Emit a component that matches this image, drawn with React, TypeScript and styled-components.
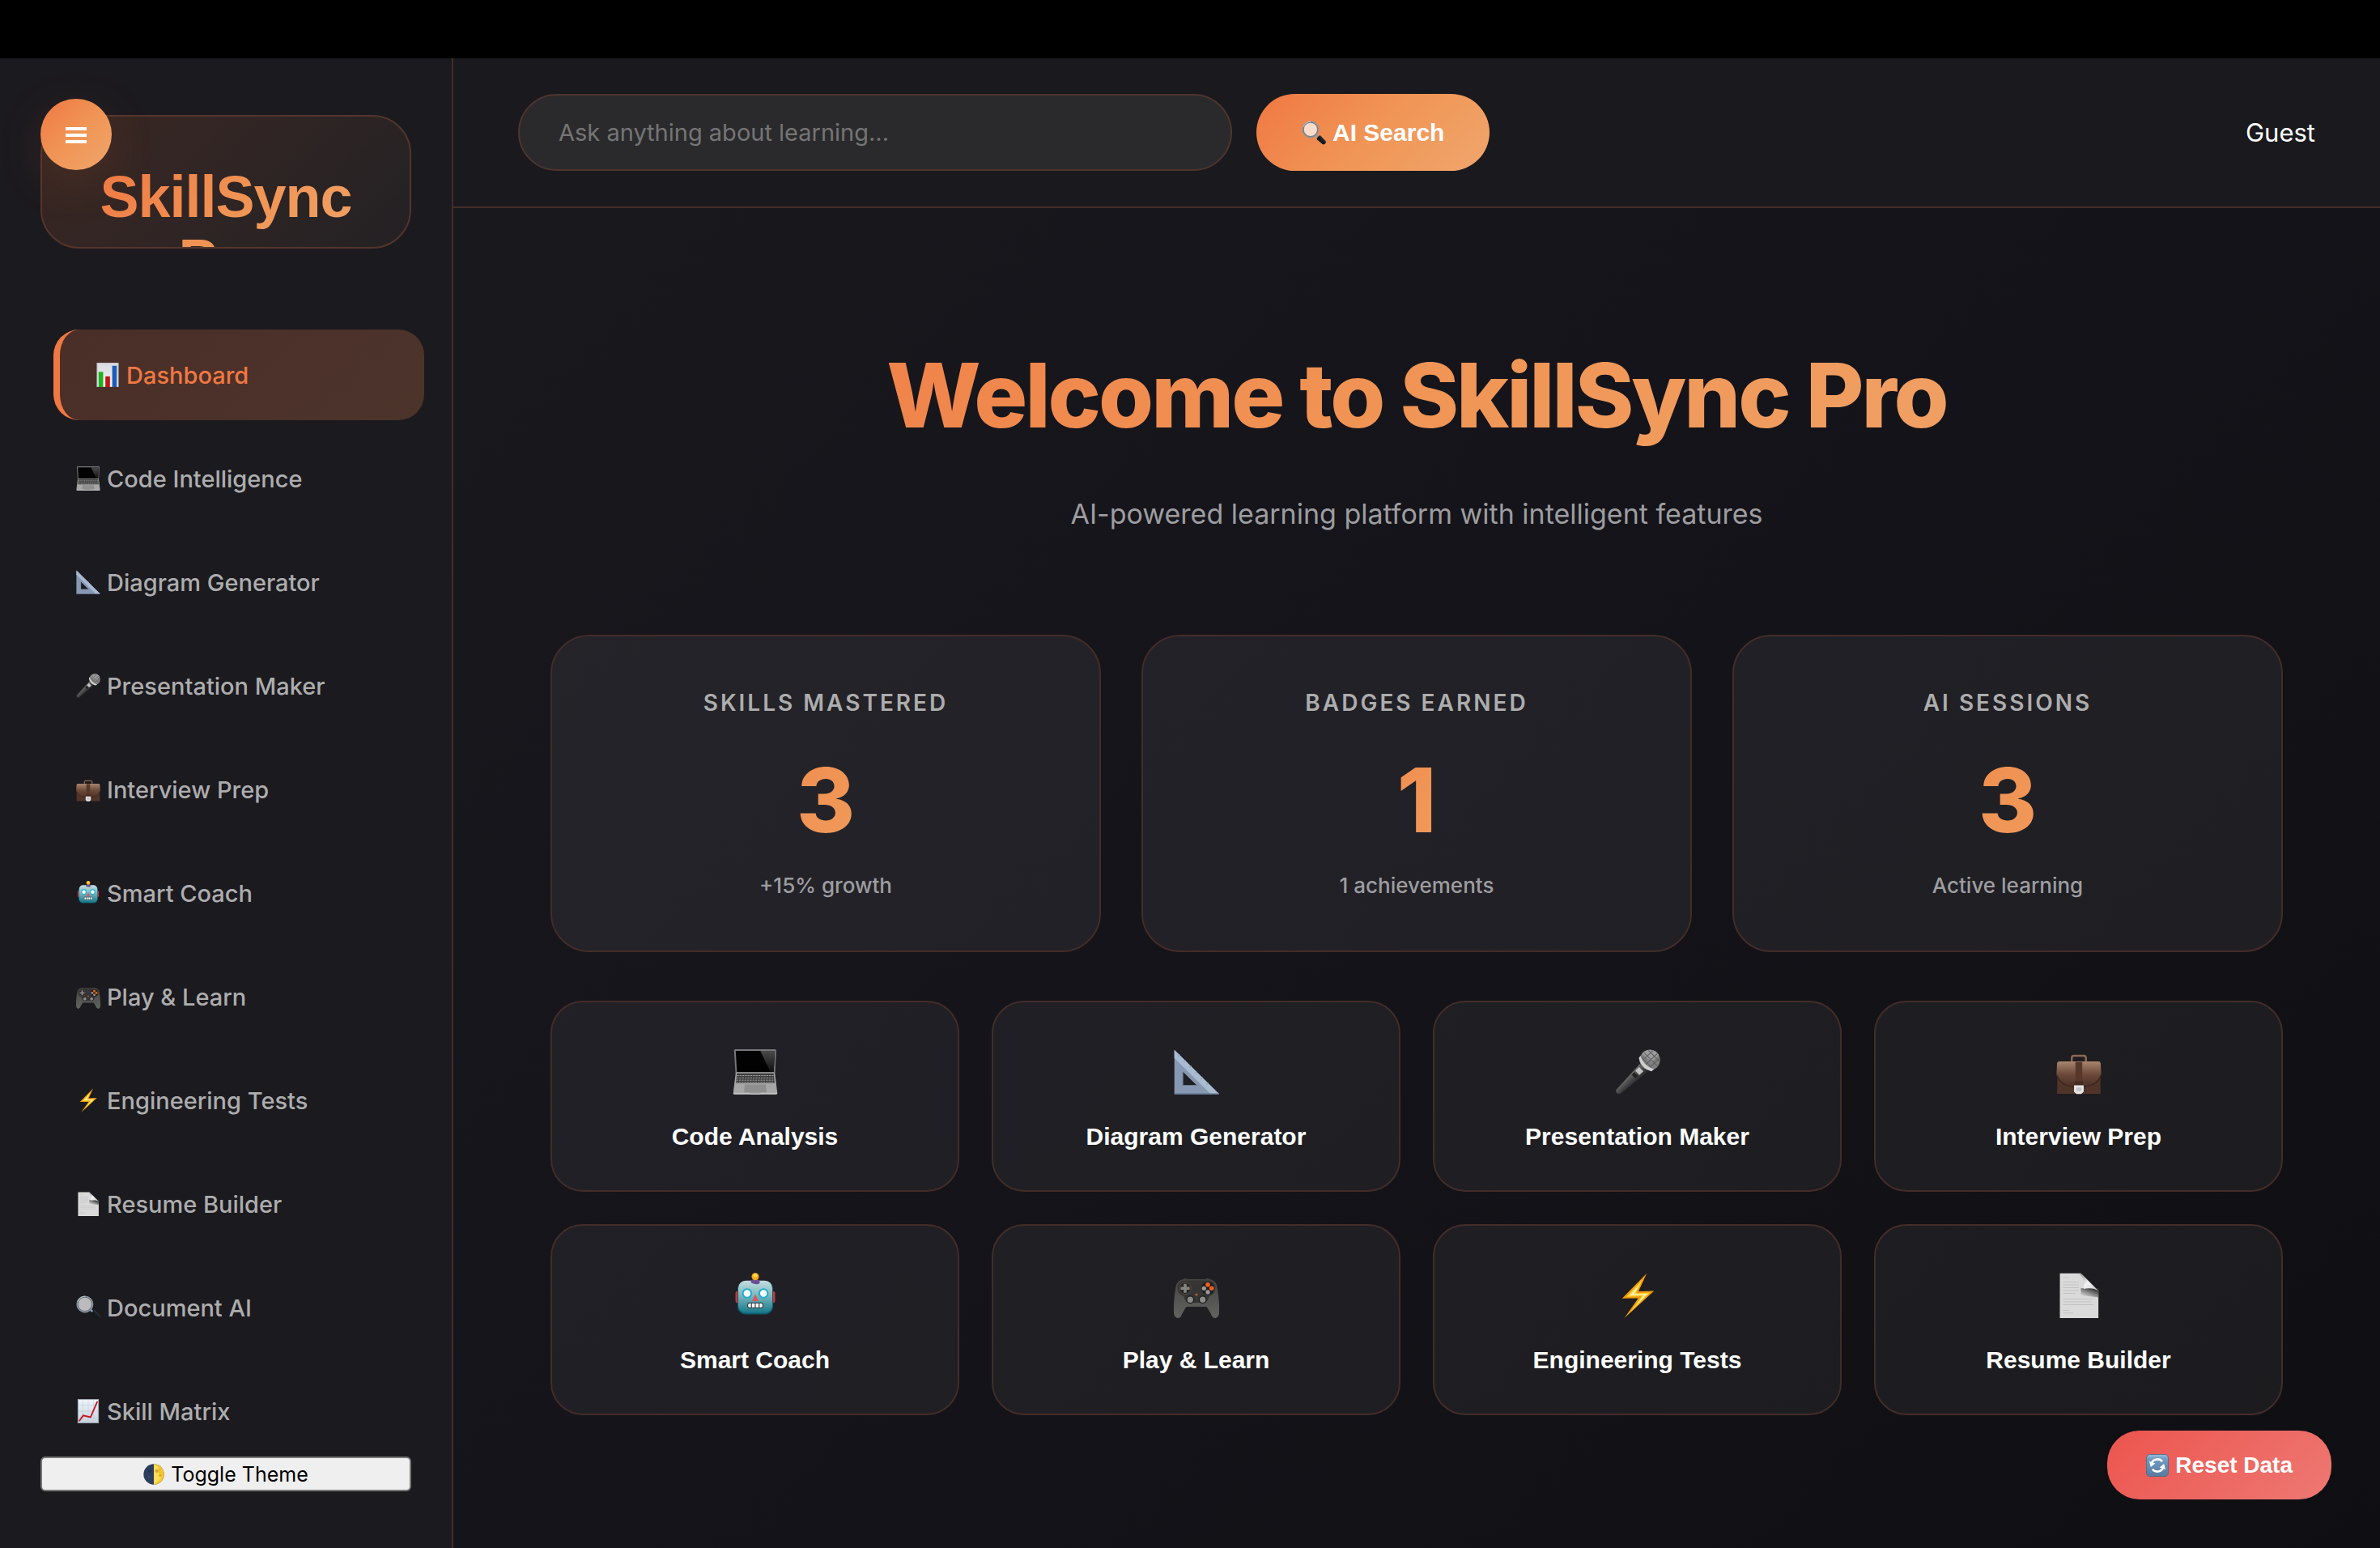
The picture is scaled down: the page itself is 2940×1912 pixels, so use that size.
import React from "react";
import styled, { createGlobalStyle, css } from "styled-components";

const ui = `Inter, "Liberation Sans", sans-serif`;
const arial = `"Liberation Sans", Arial, sans-serif`;
const accent = "linear-gradient(135deg, #f07843 0%, #f09555 50%, #f0a66d 100%)";
const line = "#432d28";

const GlobalStyle = createGlobalStyle`
  *, *::before, *::after { box-sizing: border-box; }
  body {
    margin: 0;
    background: #000;
    color: #fff;
    font-family: ${ui};
    font-size: 31px;
  }
  button, input { font: inherit; }
  h1, h2, h3, p, ul { margin: 0; padding: 0; }
`;

/* ---------- icons ---------- */

const Glyph = styled.svg<{ $size: number }>`
  display: block;
  flex: none;
  width: ${(p) => p.$size}px;
  height: ${(p) => p.$size}px;
`;

type IconName =
  | "bars" | "laptop" | "ruler" | "mic" | "case" | "robot" | "game"
  | "bolt" | "page" | "lens" | "trend" | "moon" | "sync";

const art: Record<IconName, (id: string) => React.ReactNode> = {
  bars: (id) => (
    <>
      <defs>
        <linearGradient id={id} x1="0" y1="0" x2="0" y2="1">
          <stop offset="0" stopColor="#d9dade" />
          <stop offset="1" stopColor="#f4f4f6" />
        </linearGradient>
      </defs>
      <rect x="2" y="0" width="28" height="32" fill={`url(#${id})`} stroke="#a9abb2" />
      <rect x="4" y="12" width="6" height="20" fill="#1fb41f" />
      <rect x="13" y="18" width="6" height="14" fill="#c01414" />
      <rect x="22" y="4" width="6" height="28" fill="#1c5cb8" />
    </>
  ),
  laptop: (id) => (
    <>
      <defs>
        <linearGradient id={id} x1="0" y1="0" x2="0" y2="1">
          <stop offset="0" stopColor="#4a4a4a" />
          <stop offset="1" stopColor="#101010" />
        </linearGradient>
      </defs>
      <path d="M1.6 0h28.6l.6.8-.8 16H2L1 .8z" fill="#77787a" />
      <path d="M2.2 1.2h27.6l-.8 14.8H3z" fill="#020202" />
      <path d="M19.6 1.2h10.2L29 16h-2.4z" fill={`url(#${id})`} />
      <path d="M2.2 16.4h27.6l1.8 14.6-.6 1H.9l-.5-1z" fill="#a6a6a6" />
      <path d="M3 17h26l.7 6.8H2.3z" fill="#3a3a3a" />
      <path d="M3 18.6h26M2.8 20.2h26.4M2.6 21.8h26.8M2.5 23.3h27" stroke="#b5b5b5" strokeWidth=".5" strokeDasharray="1.4 .5" />
      <path d="M8.6 24.8h14.8l.6 5.8H8z" fill="#8f8f8f" />
      <path d="M1 31h11l.7.6h6.6L20 31h11.4" stroke="#d0d0d0" strokeWidth=".5" fill="none" />
    </>
  ),
  ruler: () => (
    <>
      <path fillRule="evenodd" d="M.4.4 32 31.6H.4zM6.4 15.8v9.6h9.8z" fill="#8798b2" />
      <path d="M.4.4 32 31.6h-6L.4 6.2z" fill="#a9bbd1" />
      <path d="m3 5 1.4-1.2M7 9l1.4-1.2M11 13l1.4-1.2M15 17l1.4-1.2M19 21l1.4-1.2M23 25l1.4-1.2" stroke="#8fa2bd" strokeWidth=".6" />
      <path d="M.4 31.6H32" stroke="#5f6f89" strokeWidth=".8" />
      <path d="M6.4 15.8v9.6h9.8" stroke="#64748d" strokeWidth=".6" fill="none" />
    </>
  ),
  mic: (id) => (
    <>
      <defs>
        <linearGradient id={id} x1=".3" y1=".3" x2=".7" y2=".7">
          <stop offset="0" stopColor="#8a8a8a" />
          <stop offset=".5" stopColor="#4a4a4a" />
          <stop offset="1" stopColor="#161616" />
        </linearGradient>
      </defs>
      <path d="M17.4 10.4 1 28.4c-1.2 1.6 1 4 2.8 3L22.8 16z" fill={`url(#${id})`} />
      <path d="m14.4 15.2 2.6-2.6 3 3-2.8 2.6z" fill="#c4c4c4" />
      <path d="m11.8 18 1.8-1.8 2.6 2.6-1.8 1.8z" fill="#222" />
      <circle cx="24.6" cy="7.6" r="7.2" fill="#7f7f7f" />
      <path d="M19 3.2a7.2 7.2 0 0 1 12 .8l-5.2 5z" fill="#9c9c9c" />
      <path d="M20.4 2.4 30 11.8M23.6.8l8 8M18.2 5l8.6 9M30 3 19.6 12.6M27 .9 17.6 9.4M31.6 6.2l-8.4 8" stroke="#606060" strokeWidth=".6" />
      <path d="M18 4.6c1.2 4.4 4.6 8 9.6 9.4l-1.8 1.6c-5-1.4-8-4.8-9-9.4z" fill="#d0d0d0" />
    </>
  ),
  case: (id) => (
    <>
      <defs>
        <linearGradient id={id} x1="0" y1="0" x2="0" y2="1">
          <stop offset="0" stopColor="#a8856e" />
          <stop offset=".5" stopColor="#6d4a3a" />
          <stop offset="1" stopColor="#4a3026" />
        </linearGradient>
      </defs>
      <path d="M11 9V6.2Q11 4.6 12.6 4.6h6.8Q21 4.6 21 6.2V9" fill="none" stroke="#8a6850" strokeWidth="1.4" />
      <path d="M1 10q0-1.4 1.4-1.4h27.2Q31 8.6 31 10l.4 21.4H.6z" fill="#503428" />
      <path d="M.6 10q.2-1.4 1.8-1.4h27.2q1.6 0 1.8 1.4l.4 8c-3 7.4-9 8.4-15.8 8.4S3.2 25.4.2 18z" fill={`url(#${id})`} />
      <path d="M.3 18.2c3 7.4 8.9 8.4 15.7 8.4s12.7-1 15.7-8.4" fill="none" stroke="#3b241b" strokeWidth=".7" />
      <rect x="13.6" y="9" width="4.8" height="13.6" fill="#563729" />
      <path d="M13.4 22.6h5.2l1 4h-7.2z" fill="#452a20" />
      <path d="M12.6 25.4h6.8v4.6l-1.8 1.6h-3.200l-1.8-1.6z" fill="#e6e6e8" />
      <rect x="14.2" y="27" width="3.6" height="2.6" fill="#c2c4c8" />
    </>
  ),
  robot: (id) => (
    <>
      <defs>
        <linearGradient id={id} x1="0" y1="0" x2="0" y2="1">
          <stop offset="0" stopColor="#c4dedf" />
          <stop offset=".45" stopColor="#7db8bf" />
          <stop offset="1" stopColor="#17788a" />
        </linearGradient>
      </defs>
      <rect x="2" y="13" width="3" height="8.4" rx="1.4" fill="#d0353c" />
      <rect x="27" y="13" width="3" height="8.4" rx="1.4" fill="#d0353c" />
      <rect x="3.4" y="5.8" width="25.2" height="23.6" rx="5.6" fill="#0f5c6e" />
      <rect x="4" y="5.6" width="24" height="22.8" rx="5.2" fill={`url(#${id})`} />
      <path d="M12.8 6.6q0-2 3.2-2t3.2 2-3.2 1.4-3.2-1.4z" fill="#6a4f96" />
      <circle cx="16" cy="2.700" r="2.6" fill="#f5a81c" />
      <circle cx="16" cy="2" r="1.4" fill="#ffd84a" />
      <circle cx="10.2" cy="14.6" r="3" fill="#fff" stroke="#1fb0cf" strokeWidth="1.2" />
      <circle cx="21.8" cy="14.6" r="3" fill="#fff" stroke="#1fb0cf" strokeWidth="1.2" />
      <path d="m16 15.2 2.2 4.8h-4.4z" fill="#e0525a" />
      <rect x="10.6" y="21.4" width="10.8" height="3.4" rx="1.4" fill="#fff" stroke="#334a52" strokeWidth=".7" />
      <path d="M13.3 21.4v3.4M16 21.4v3.4M18.7 21.4v3.4" stroke="#334a52" strokeWidth=".7" />
    </>
  ),
  game: (id) => (
    <>
      <defs>
        <linearGradient id={id} x1="0" y1="0" x2="0" y2="1">
          <stop offset="0" stopColor="#444543" />
          <stop offset="1" stopColor="#62625e" />
        </linearGradient>
      </defs>
      <path d="M7 4.4Q8.2 3.4 9.4 4.6h13.2q1.2-1.2 2.4-.2 4.8.8 5.6 5.6Q32.400 20 32 28.600q-.4 3-2.600 3.400-2.400 0-3.200-3l-3-5H8.8l-3 5q-.8 3-3.200 3Q.4 31.6 0 28.6-.4 20 1.4 10 2.2 5.2 7 4.4z" fill={`url(#${id})`} />
      <path d="M2.6 9.6Q4 5.4 8.4 5.4h15.200q4.400 0 5.800 4.200.4 5.400-4.400 7-1 4.600-4.800 4.600h-8.400q-3.800 0-4.800-4.600-4.800-1.600-4.400-7z" fill="#343534" />
      <circle cx="8" cy="11" r="4.2" fill="#262626" stroke="#6b4a3a" strokeWidth=".5" />
      <path d="M7 7.8h2V10h2.2v2H9v2.2H7V12H4.8v-2H7z" fill="#858582" />
      <circle cx="24" cy="11" r="4.6" fill="#1e1e1e" />
      <circle cx="24" cy="8.4" r="1.6" fill="#f0601c" />
      <circle cx="26.7" cy="11" r="1.6" fill="#f0601c" />
      <circle cx="21.3" cy="11" r="1.5" fill="#9a9a98" />
      <circle cx="24" cy="13.7" r="1.5" fill="#9a9a98" />
      <circle cx="11.6" cy="19" r="2.5" fill="#8b8b88" stroke="#1c1c1c" strokeWidth=".8" />
      <circle cx="20.4" cy="19" r="2.5" fill="#8b8b88" stroke="#1c1c1c" strokeWidth=".8" />
      <circle cx="16" cy="15.4" r=".9" fill="#b85a2c" />
    </>
  ),
  bolt: () => (
    <>
      <path d="M22.4.4 5 18.2l11.4-.2L6.6 32l21-19.200-11 .4z" fill="#f09a0c" />
      <path d="M19.6 4.6 8 17l10.8-.4-8 11.2L24.800 14l-10 .4z" fill="#ffd033" />
      <path d="M17.4 8.4 10.4 16l10-.4-5 7 7.400-7.800-9.400.4z" fill="#fff3bd" />
    </>
  ),
  page: (id) => (
    <>
      <defs>
        <linearGradient id={id} x1="0" y1="0" x2="1" y2="1">
          <stop offset="0" stopColor="#8a8a8a" />
          <stop offset=".5" stopColor="#f4f4f4" />
          <stop offset="1" stopColor="#c4c4c4" />
        </linearGradient>
        <linearGradient id={`${id}s`} x1="0.6" y1="0" x2="0" y2=".8">
          <stop offset="0" stopColor="#3c3c3c" />
          <stop offset="1" stopColor="#dadada" />
        </linearGradient>
      </defs>
      <path d="M2.6.4h14.8L29.8 12.800V32H2.600z" fill="#dadada" />
      <path d="M17.400 11h12.400v6.400l-12.400-1.400z" fill={`url(#${id}s)`} />
      <path d="M16 .4h1.400L29.800 12.800c-3-2-6.800-2.400-10.400-1.400C20 7 19.600 3.400 16 .4z" fill={`url(#${id})`} />
      <path d="M5 3.4h4M5 6.6h11M5 8.6h11M5 10.6h11M5 12.6h11M5 14.6h9M5 18.6h21M5 20.600h20M5 22.600h21M5 26.600h4M5 28.400h7" stroke="#c2c2c2" strokeWidth=".6" />
    </>
  ),
  lens: (id) => (
    <>
      <defs>
        <linearGradient id={id} x1="0" y1="1" x2="1" y2="0">
          <stop offset="0" stopColor="#050607" />
          <stop offset=".6" stopColor="#1c2226" />
          <stop offset="1" stopColor="#8b99a2" />
        </linearGradient>
      </defs>
      <path d="m18.4 20 1.800-1.800 3 2.600-2 2z" fill="#8fa0aa" />
      <path d="m20 23 3-3.200q1.400-.6 2.400.4l6 6.400q1.200 1.800-.4 3.800-2 1.800-3.800.6L20.400 25q-1-1-.4-2z" fill={`url(#${id})`} />
      <circle cx="11.600" cy="11.600" r="9.600" fill="#fff" fillOpacity=".7" />
      <circle cx="11.600" cy="11.600" r="10.200" fill="none" stroke="#8796a0" strokeWidth="2" />
      <circle cx="11.600" cy="11.600" r="9.200" fill="none" stroke="#59636b" strokeWidth=".8" />
      <path d="M2 8Q5 1.400 12 1.200" fill="none" stroke="#c9d2d8" strokeWidth="1" />
    </>
  ),
  trend: (id) => (
    <>
      <defs>
        <linearGradient id={id} x1="0" y1="0" x2="0" y2="1">
          <stop offset="0" stopColor="#eef3f8" />
          <stop offset="1" stopColor="#c6d2de" />
        </linearGradient>
      </defs>
      <rect x="2.4" y=".4" width="27.2" height="31.2" fill={`url(#${id})`} stroke="#9aa6b2" strokeWidth=".8" />
      <path d="M9 1v30M16 1v30M23 1v30M3 8h26M3 16h26M3 24h26" stroke="#b9c8d6" strokeWidth=".5" />
      <path d="M4 29 9.4 21.6 19 24 28 3.2" fill="none" stroke="#c8141e" strokeWidth="2" />
    </>
  ),
  moon: () => (
    <>
      <circle cx="16" cy="16" r="15.6" fill="#2c3d5e" />
      <path d="M16 .4a15.6 15.6 0 0 1 0 31.200z" fill="#f5c62e" />
      <path d="M16 .4Q24 3 23 9t3 9-10 13.600z" fill="#ffdc55" />
      <circle cx="20.6" cy="11" r="2.6" fill="#d9a13a" />
      <circle cx="25.6" cy="17.6" r="2" fill="#dca53a" />
      <circle cx="25" cy="9" r="1.600" fill="#e3b040" />
      <circle cx="10" cy="11" r="2.6" fill="#23314e" />
      <circle cx="8.6" cy="20" r="2" fill="#384a6e" />
    </>
  ),
  sync: (id) => (
    <>
      <defs>
        <linearGradient id={id} x1="0" y1="0" x2="0" y2="1">
          <stop offset="0" stopColor="#9cc0dc" />
          <stop offset=".2" stopColor="#6f9cc4" />
          <stop offset="1" stopColor="#587a9e" />
        </linearGradient>
      </defs>
      <rect x=".5" y=".5" width="31" height="31" rx="5" fill={`url(#${id})`} stroke="#4a6a8a" />
      <path d="M8 12.4A9 9 0 0 1 23 10.6M24 19.6A9 9 0 0 1 9 21.4" fill="none" stroke="#fff" strokeWidth="3" />
      <path d="m4.6 10.2 2 8 6.400-5zM27.400 21.800l-2-8-6.400 5z" fill="#fff" />
    </>
  ),
};

function Icon({ name, size }: { name: IconName; size: number }) {
  const id = React.useId();
  return (
    <Glyph $size={size} viewBox="0 0 32 32" aria-hidden="true">
      {art[name](id)}
    </Glyph>
  );
}

/* ---------- frame ---------- */

const Page = styled.div`
  display: grid;
  grid-template-rows: 72px 1fr;
  min-height: 100vh;
`;

const TopStrip = styled.div`
  background: #000;
`;

const Shell = styled.div`
  display: grid;
  grid-template-columns: 560px minmax(0, 1fr);
  background: linear-gradient(135deg, #1b1a1e 0%, #15141a 50%, #0f0f13 100%);
`;

/* ---------- sidebar ---------- */

const Sidebar = styled.aside`
  position: relative;
  display: flex;
  flex-direction: column;
  padding: 70px 50px;
  border-right: 2px solid ${line};
  background: #1b1a1f;
`;

const MenuButton = styled.button`
  position: absolute;
  top: 50px;
  left: 50px;
  display: grid;
  place-items: center;
  width: 88px;
  height: 88px;
  padding: 0;
  border: 0;
  border-radius: 50%;
  background: ${accent};
  box-shadow: 0 16px 64px rgba(240, 120, 67, 0.12);
`;

const Brand = styled.div`
  height: 165px;
  padding: 60px 62px;
  border: 2px solid #55352b;
  border-radius: 48px;
  overflow: hidden;
  background: linear-gradient(135deg, #38251f 0%, #332624 35%, #232124 100%);
  text-align: center;
`;

const BrandName = styled.h2`
  font: 700 72px/78px ${arial};
  letter-spacing: -1px;
  color: transparent;
  background: ${accent};
  background-clip: text;
`;

const NavList = styled.ul`
  display: grid;
  gap: 16px;
  margin-top: 100px;
  list-style: none;
`;

const NavLink = styled.a<{ $active?: boolean }>`
  display: flex;
  align-items: center;
  gap: 8px;
  height: 112px;
  padding: 0 44px;
  border-radius: 32px;
  color: #adadae;
  font-weight: 500;
  font-size: 29px;
  text-decoration: none;
  white-space: nowrap;
  ${(p) =>
    p.$active &&
    css`
      margin: 0 -16px 0 16px;
      border-left: 8px solid #f07843;
      background: linear-gradient(135deg, #4a2e28, #4c342b);
      color: #f07843;
    `}
`;

const ThemeButton = styled.button`
  display: flex;
  align-items: center;
  justify-content: center;
  gap: 8px;
  height: 43px;
  padding: 0;
  border: 2px solid #767676;
  border-radius: 6px;
  background: #efefef;
  color: #000;
  font-size: 25px;
`;

/* ---------- main column ---------- */

const Main = styled.div`
  display: flex;
  flex-direction: column;
`;

const Header = styled.header`
  display: flex;
  align-items: center;
  justify-content: space-between;
  padding: 44px 80px;
  border-bottom: 2px solid ${line};
  background: #1a191d;
`;

const SearchForm = styled.form`
  display: flex;
  gap: 30px;
`;

const SearchInput = styled.input`
  width: 882px;
  height: 95px;
  padding: 0 48px;
  border: 2px solid #4e352d;
  border-radius: 48px;
  outline: 0;
  background: #2a2a2c;
  color: #fff;
  font-size: 29px;
  &::placeholder { color: #757575; opacity: 1; }
`;

const PillButton = styled.button<{ $tone: "accent" | "danger" }>`
  display: flex;
  align-items: center;
  gap: 8px;
  border: 0;
  color: #fff;
  font-family: ${arial};
  font-weight: 700;
  white-space: nowrap;
  ${(p) =>
    p.$tone === "accent"
      ? css`
          padding: 0 56px;
          border-radius: 48px;
          background: ${accent};
          font-size: 30px;
        `
      : css`
          position: fixed;
          right: 60px;
          bottom: 60px;
          height: 85px;
          padding: 0 48px;
          border-radius: 40px;
          background: linear-gradient(135deg, #ec554e, #ee7873);
          font-size: 28px;
        `}
`;

const Content = styled.main`
  padding: 158px 120px 120px;
`;

const Hero = styled.section`
  text-align: center;
`;

const HeroTitle = styled.h1`
  font-weight: 800;
  font-size: 110px;
  line-height: 146px;
  letter-spacing: -3px;
  color: transparent;
  background: ${accent};
  background-clip: text;
`;

const HeroText = styled.p`
  margin-top: 44px;
  color: #9d9da0;
  font-size: 34px;
  line-height: 60px;
`;

const Stats = styled.section`
  display: grid;
  grid-template-columns: repeat(3, 1fr);
  gap: 50px;
  margin-top: 119px;
`;

const StatCard = styled.article`
  display: flex;
  flex-direction: column;
  align-items: center;
  height: 392px;
  padding: 58px 48px;
  border: 2px solid ${line};
  border-radius: 48px;
  background: rgba(255, 255, 255, 0.06);
`;

const StatLabel = styled.h3`
  color: #adadae;
  font-weight: 600;
  font-size: 28px;
  line-height: 48px;
  letter-spacing: 3px;
  text-transform: uppercase;
`;

const StatValue = styled.p`
  align-self: stretch;
  margin-top: 40px;
  font-weight: 800;
  font-size: 110px;
  line-height: 112px;
  text-align: center;
  color: transparent;
  background: ${accent};
  background-clip: text;
`;

const StatNote = styled.p`
  margin-top: 28px;
  color: #9d9da0;
  font-weight: 500;
  font-size: 26px;
  line-height: 44px;
`;

const Actions = styled.section`
  display: grid;
  grid-template-columns: repeat(4, 1fr);
  gap: 40px;
  margin-top: 60px;
`;

const ActionCard = styled.button`
  display: flex;
  flex-direction: column;
  align-items: center;
  gap: 34px;
  height: 236px;
  padding: 58px 40px 0;
  border: 2px solid ${line};
  border-radius: 40px;
  background: rgba(255, 255, 255, 0.05);
  color: #fff;
  font: 700 30px/36px ${arial};
`;

const nav: { icon: IconName; label: string }[] = [
  { icon: "bars", label: "Dashboard" },
  { icon: "laptop", label: "Code Intelligence" },
  { icon: "ruler", label: "Diagram Generator" },
  { icon: "mic", label: "Presentation Maker" },
  { icon: "case", label: "Interview Prep" },
  { icon: "robot", label: "Smart Coach" },
  { icon: "game", label: "Play & Learn" },
  { icon: "bolt", label: "Engineering Tests" },
  { icon: "page", label: "Resume Builder" },
  { icon: "lens", label: "Document AI" },
  { icon: "trend", label: "Skill Matrix" },
];

const stats = [
  { label: "Skills Mastered", value: "3", note: "+15% growth" },
  { label: "Badges Earned", value: "1", note: "1 achievements" },
  { label: "AI Sessions", value: "3", note: "Active learning" },
];

const actions: { icon: IconName; label: string }[] = [
  { icon: "laptop", label: "Code Analysis" },
  { icon: "ruler", label: "Diagram Generator" },
  { icon: "mic", label: "Presentation Maker" },
  { icon: "case", label: "Interview Prep" },
  { icon: "robot", label: "Smart Coach" },
  { icon: "game", label: "Play & Learn" },
  { icon: "bolt", label: "Engineering Tests" },
  { icon: "page", label: "Resume Builder" },
];

export default function App() {
  return (
    <>
      <GlobalStyle />
      <Page>
        <TopStrip />
        <Shell>
          <Sidebar>
            <Brand>
              <BrandName>SkillSync Pro</BrandName>
            </Brand>
            <nav>
              <NavList>
                {nav.map((item, i) => (
                  <li key={item.label}>
                    <NavLink href="#" $active={i === 0}>
                      <Icon name={item.icon} size={30} />
                      {item.label}
                    </NavLink>
                  </li>
                ))}
              </NavList>
            </nav>
            <ThemeButton type="button">
              <Icon name="moon" size={26} />
              Toggle Theme
            </ThemeButton>
            <MenuButton type="button" aria-label="Toggle menu">
              <svg width="26" height="22" viewBox="0 0 26 22" aria-hidden="true">
                <path d="M0 4h26M0 12h26M0 20h26" stroke="#fff" strokeWidth="4" />
              </svg>
            </MenuButton>
          </Sidebar>
          <Main>
            <Header>
              <SearchForm onSubmit={(e) => e.preventDefault()}>
                <SearchInput
                  type="text"
                  aria-label="Search"
                  placeholder="Ask anything about learning..."
                />
                <PillButton type="submit" $tone="accent">
                  <Icon name="lens" size={30} />
                  AI Search
                </PillButton>
              </SearchForm>
              <span>Guest</span>
            </Header>
            <Content>
              <Hero>
                <HeroTitle>Welcome to SkillSync Pro</HeroTitle>
                <HeroText>AI-powered learning platform with intelligent features</HeroText>
              </Hero>
              <Stats>
                {stats.map((s) => (
                  <StatCard key={s.label}>
                    <StatLabel>{s.label}</StatLabel>
                    <StatValue>{s.value}</StatValue>
                    <StatNote>{s.note}</StatNote>
                  </StatCard>
                ))}
              </Stats>
              <Actions>
                {actions.map((a) => (
                  <ActionCard key={a.label} type="button">
                    <Icon name={a.icon} size={56} />
                    {a.label}
                  </ActionCard>
                ))}
              </Actions>
            </Content>
          </Main>
        </Shell>
        <PillButton type="button" $tone="danger">
          <Icon name="sync" size={28} />
          Reset Data
        </PillButton>
      </Page>
    </>
  );
}
